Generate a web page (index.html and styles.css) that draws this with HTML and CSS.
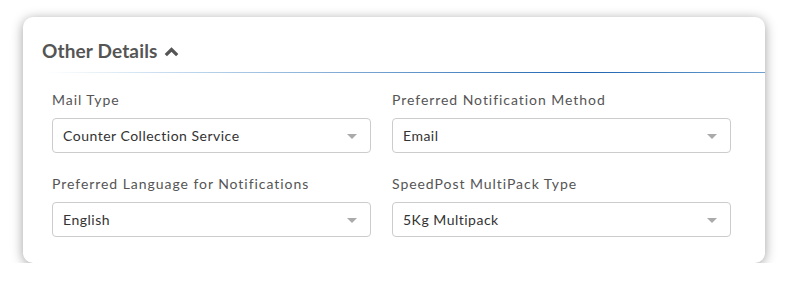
FILE: index.html
```html
<!DOCTYPE html>
<html lang="en">
<head>
    <meta charset="UTF-8">
    <title>Other Details</title>
    <link rel="stylesheet" href="styles.css">
</head>
<body>
    <div class="card">
        <!-- Section header -->
        <h3 class="section-title">
            Other Details
            <svg class="chevron" width="15" height="11" viewBox="0 0 15 11">
                <path d="M1.8 9.2 L7.5 3.5 L13.2 9.2" fill="none" stroke="#555" stroke-width="3.2"/>
            </svg>
        </h3>
        <div class="divider"></div>

        <div class="form-grid">
            <div class="form-group">
                <label>Mail Type</label>
                <div class="select">Counter Collection Service<span class="caret"></span></div>
            </div>
            <div class="form-group">
                <label>Preferred Notification Method</label>
                <div class="select">Email<span class="caret"></span></div>
            </div>
            <div class="form-group">
                <label>Preferred Language for Notifications</label>
                <div class="select">English<span class="caret"></span></div>
            </div>
            <div class="form-group">
                <label>SpeedPost MultiPack Type</label>
                <div class="select">5Kg Multipack<span class="caret"></span></div>
            </div>
        </div>
    </div>
</body>
</html>
```

FILE: styles.css
```css
body {
    margin: 0;
    background: #fff;
    font-family: Lato, "Open Sans", sans-serif;
}
.card {
    margin: 17px 0 0 23px;
    width: 742px;
    height: 246px;
    box-sizing: border-box;
    background: #fff;
    border-radius: 10px;
    box-shadow: 0 2px 12px rgba(0, 0, 0, 0.38);
    padding-top: 22px;
}
.section-title {
    margin: 0 0 0 19px;
    font-size: 19px;
    letter-spacing: 0.15px;
    line-height: 24px;
    font-weight: bold;
    color: #555;
    display: flex;
    align-items: center;
    gap: 6px;
}
.chevron {
    margin-top: 1px;
}
.divider {
    margin: 9px 0 0 24px;
    height: 1px;
    background: linear-gradient(to right, rgba(255,255,255,0), #bcd5ec 20%, #1f64b0 75%, #6fa0d0);
}
.form-grid {
    display: grid;
    grid-template-columns: 319px 339px;
    column-gap: 21px;
    row-gap: 22px;
    margin: 18px 0 0 29px;
}
label {
    display: block;
    font-size: 14px;
    letter-spacing: 0.95px;
    line-height: 18px;
    color: #555;
    margin-bottom: 9px;
}
.select {
    position: relative;
    height: 35px;
    box-sizing: border-box;
    border: 1px solid #ccc;
    border-radius: 4px;
    padding: 0 10px;
    font-size: 14px;
    letter-spacing: 0.5px;
    line-height: 33px;
    color: #333;
}
.caret {
    position: absolute;
    right: 13px;
    top: 15px;
    border-left: 5px solid transparent;
    border-right: 5px solid transparent;
    border-top: 5px solid #aaa;
}
```
